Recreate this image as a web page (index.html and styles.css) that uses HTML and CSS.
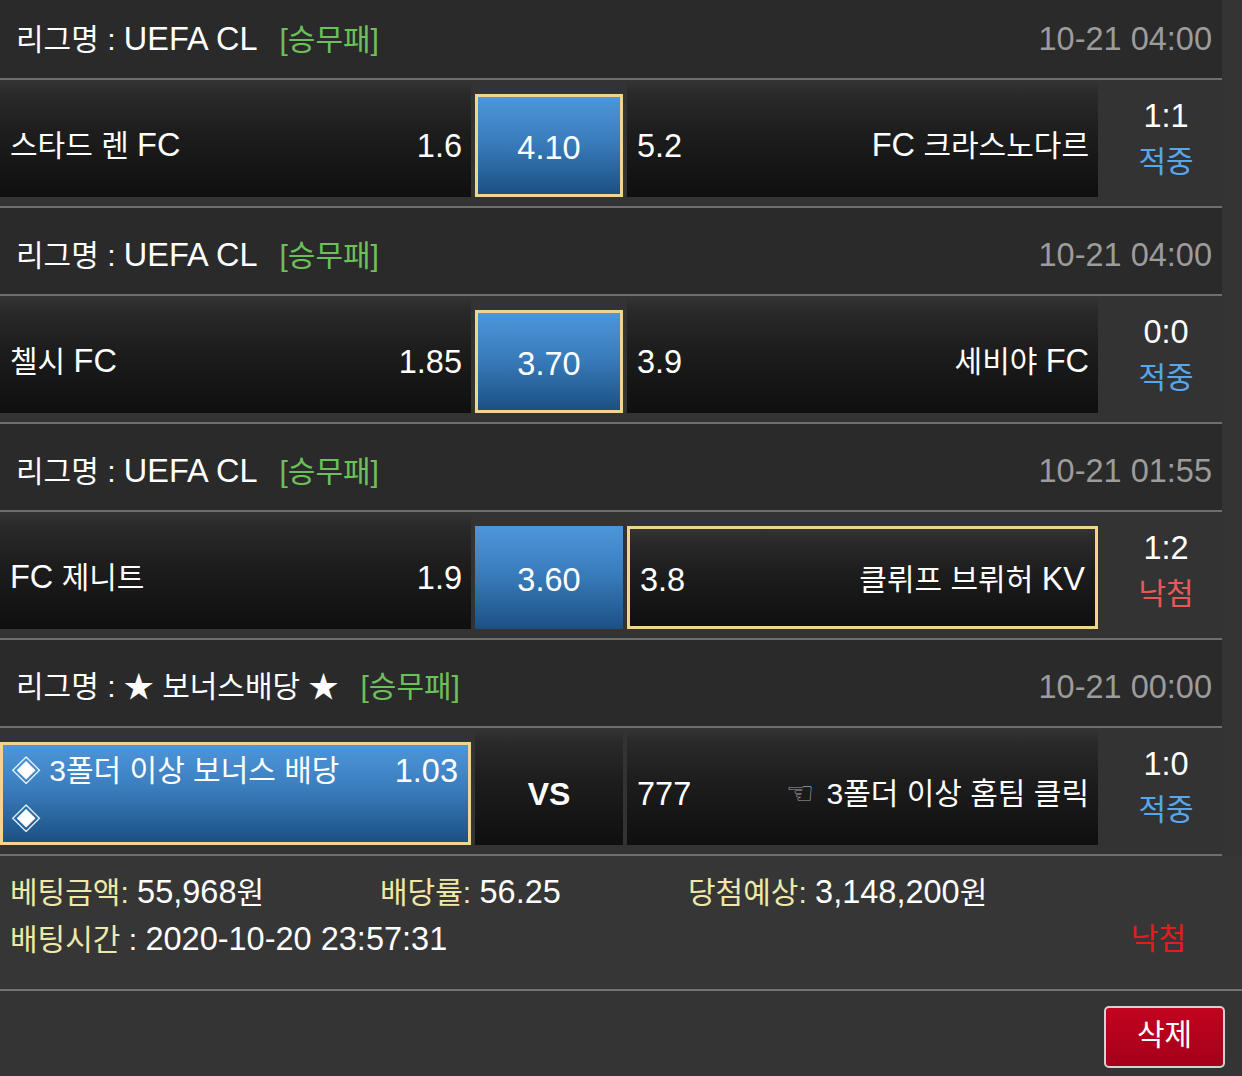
FILE: index.html
```html
<!DOCTYPE html>
<html lang="ko">
<head>
<meta charset="utf-8">
<title>배팅내역</title>
<link rel="stylesheet" href="styles.css">
</head>
<body>
<div class="list">
  <div class="hd hd-first">
    <div class="league">리그명 : <span class="en">UEFA CL</span><span class="type">[승무패]</span></div>
    <div class="date num">10-21 04:00</div>
  </div>
  <div class="match">
    <div class="cell dark"><span class="name">스타드 렌 <span class="en">FC</span></span><span class="odd num">1.6</span></div>
    <div class="cell blue picked mid num">4.10</div>
    <div class="cell dark"><span class="odd num">5.2</span><span class="name"><span class="en">FC</span> 크라스노다르</span></div>
    <div class="score"><div class="num">1:1</div><div class="hit">적중</div></div>
  </div>

  <div class="hd">
    <div class="league">리그명 : <span class="en">UEFA CL</span><span class="type">[승무패]</span></div>
    <div class="date num">10-21 04:00</div>
  </div>
  <div class="match">
    <div class="cell dark"><span class="name">첼시 <span class="en">FC</span></span><span class="odd num">1.85</span></div>
    <div class="cell blue picked mid num">3.70</div>
    <div class="cell dark"><span class="odd num">3.9</span><span class="name">세비야 <span class="en">FC</span></span></div>
    <div class="score"><div class="num">0:0</div><div class="hit">적중</div></div>
  </div>

  <div class="hd">
    <div class="league">리그명 : <span class="en">UEFA CL</span><span class="type">[승무패]</span></div>
    <div class="date num">10-21 01:55</div>
  </div>
  <div class="match">
    <div class="cell dark"><span class="name"><span class="en">FC</span> 제니트</span><span class="odd num">1.9</span></div>
    <div class="cell blue boxed mid num">3.60</div>
    <div class="cell dark boxed picked"><span class="odd num">3.8</span><span class="name">클뤼프 브뤼허 <span class="en">KV</span></span></div>
    <div class="score"><div class="num">1:2</div><div class="miss">낙첨</div></div>
  </div>

  <div class="hd">
    <div class="league">리그명 : ★ 보너스배당 ★<span class="type">[승무패]</span></div>
    <div class="date num">10-21 00:00</div>
  </div>
  <div class="match">
    <div class="cell blue picked bonus"><span class="bname">◈ 3폴더 이상 보너스 배당 ◈</span><span class="bodd num">1.03</span></div>
    <div class="cell dark mid vs">VS</div>
    <div class="cell dark"><span class="odd num">777</span><span class="name"><span class="hand">☜</span> 3폴더 이상 홈팀 클릭</span></div>
    <div class="score"><div class="num">1:0</div><div class="hit">적중</div></div>
  </div>
</div>

<div class="summary">
  <div class="sum-line">
    <div><span class="lbl">베팅금액:</span> <span class="num">55,968</span>원</div>
    <div><span class="lbl">배당률:</span> <span class="num">56.25</span></div>
    <div><span class="lbl">당첨예상:</span> <span class="num">3,148,200</span>원</div>
  </div>
  <div class="sum-line2">
    <div><span class="lbl">배팅시간</span> : <span class="num">2020-10-20 23:57:31</span></div>
    <div class="result-miss">낙첨</div>
  </div>
</div>

<div class="actions">
  <button class="btn-del">삭제</button>
</div>
</body>
</html>
```

FILE: styles.css
```css
* { box-sizing: border-box; }

html, body {
  margin: 0;
  padding: 0;
}

body {
  background: #343434;
  color: #ffffff;
  font-family: "Liberation Sans", "Noto Sans CJK KR", sans-serif;
  font-size: 30px;
  width: 1242px;
  height: 1076px;
  overflow: hidden;
}

.num, .en {
  font-size: 32.5px;
}

.list {
  width: 1222px;
}

.hd {
  height: 88px;
  padding: 8px 10px 0 16px;
  background: #2a2a2a;
  border-bottom: 2px solid #6e6e6e;
  display: flex;
  align-items: center;
  justify-content: space-between;
  line-height: 40px;
}

.hd-first {
  height: 80px;
  padding-top: 0;
}

.type {
  color: #6cc05a;
  margin-left: 22px;
}

.date {
  color: #9c9c9c;
}

.match {
  height: 128px;
  background: #333333;
  border-bottom: 2px solid #6e6e6e;
  padding-bottom: 9px;
  display: grid;
  grid-template-columns: 471px 148px 471px 1fr;
  column-gap: 4px;
  align-items: end;
}

.cell {
  height: 117px;
  display: flex;
  align-items: center;
  justify-content: space-between;
  padding: 14px 9px 0 10px;
  line-height: 40px;
  white-space: nowrap;
}

.dark {
  background: linear-gradient(to bottom, #343434 0%, #2a2a2a 12%, #1d1d1d 45%, #0f0f0f 100%);
}

.blue {
  background: linear-gradient(to bottom, #4d96da 0%, #3a7dbd 45%, #1c5083 100%);
}

.boxed, .picked {
  height: 103px;
  padding-top: 4px;
}

.picked {
  border: 3px solid #f1d58c;
  padding-left: 10px;
  padding-right: 10px;
}

.mid {
  justify-content: center;
  padding-left: 0;
  padding-right: 0;
}

.vs {
  font-weight: bold;
  font-size: 32px;
}

.bonus {
  align-items: flex-start;
  padding: 2px 10px 0 8px;
  white-space: normal;
  line-height: 48px;
}

.bname {
  width: 345px;
}

.hand {
  font-family: "DejaVu Sans", sans-serif;
  font-size: 32px;
  color: #a0a0a0;
  margin-right: 4px;
}

.score {
  height: 117px;
  display: flex;
  flex-direction: column;
  align-items: center;
  justify-content: center;
  line-height: 46px;
  padding-left: 8px;
}

.hit { color: #5aa6e8; }
.miss { color: #e8585a; }

.summary {
  background: #363636;
  border-bottom: 2px solid #737373;
  padding: 13px 56px 26px 10px;
  line-height: 46px;
}

.sum-line {
  display: grid;
  grid-template-columns: 370px 308px auto;
}

.sum-line2 {
  display: flex;
  justify-content: space-between;
}

.lbl { color: #efe8a8; }

.result-miss { color: #e21d1d; }

.actions {
  display: flex;
  justify-content: flex-end;
  padding: 15px 17px 0 0;
}

.btn-del {
  width: 121px;
  height: 62px;
  background: linear-gradient(to bottom, #c2041f, #a5001a);
  border: 2px solid #d2d2d2;
  border-radius: 5px;
  color: #ffffff;
  font-family: "Liberation Sans", "Noto Sans CJK KR", sans-serif;
  font-size: 30px;
  line-height: 40px;
  padding: 0 0 4px 0;
}
```
